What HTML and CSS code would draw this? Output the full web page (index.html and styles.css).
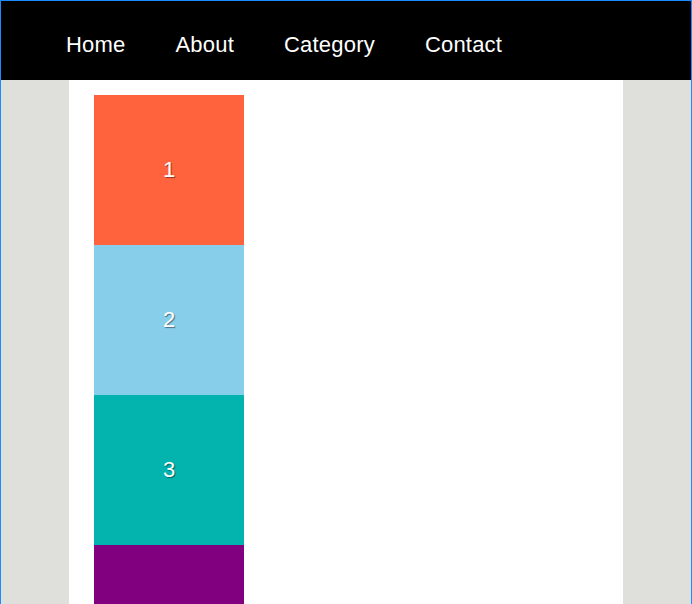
FILE: index.html
```html
<!DOCTYPE html>
<html>
<head>
<meta charset="utf-8">
<link rel="stylesheet" href="styles.css">
</head>
<body>
<div class="frame">
  <nav class="topnav">
    <ul class="menu">
      <li><a href="#">Home</a></li>
      <li><a href="#">About</a></li>
      <li><a href="#">Category</a></li>
      <li><a href="#">Contact</a></li>
    </ul>
  </nav>
  <main class="page">
    <div class="content">
      <div class="box box-1">1</div>
      <div class="box box-2">2</div>
      <div class="box box-3">3</div>
      <div class="box box-4">4</div>
    </div>
  </main>
</div>
</body>
</html>
```
FILE: styles.css
```css
html, body {
  margin: 0;
  padding: 0;
  background: #dfe0dc;
  font-family: "Liberation Sans", Arial, sans-serif;
}
.frame {
  border: 1px solid #1a8cff;
  border-bottom: none;
}
.topnav {
  background: #000;
  height: 79px;
  box-sizing: border-box;
  padding-top: 31px;
}
.menu {
  list-style: none;
  margin: 0;
  padding: 0 0 0 40px;
  display: flex;
}
.menu li a {
  display: block;
  padding: 0 25px;
  color: #fff;
  text-decoration: none;
  font-size: 22px;
  line-height: 25px;
  letter-spacing: 0.2px;
}
.page {
  background: #dfe0dc;
}
.content {
  width: 554px;
  margin: 0 auto;
  background: #fff;
  padding: 15px 25px;
  box-sizing: border-box;
}
.box {
  width: 150px;
  height: 150px;
  display: flex;
  align-items: center;
  justify-content: center;
  color: #fff;
  font-size: 22px;
  text-shadow: 1px 1px 1px rgba(0, 0, 0, 0.45);
}
.box-1 { background: #ff633e; }
.box-2 { background: #87ceeb; }
.box-3 { background: #03b3ae; }
.box-4 { background: #800080; }
```
